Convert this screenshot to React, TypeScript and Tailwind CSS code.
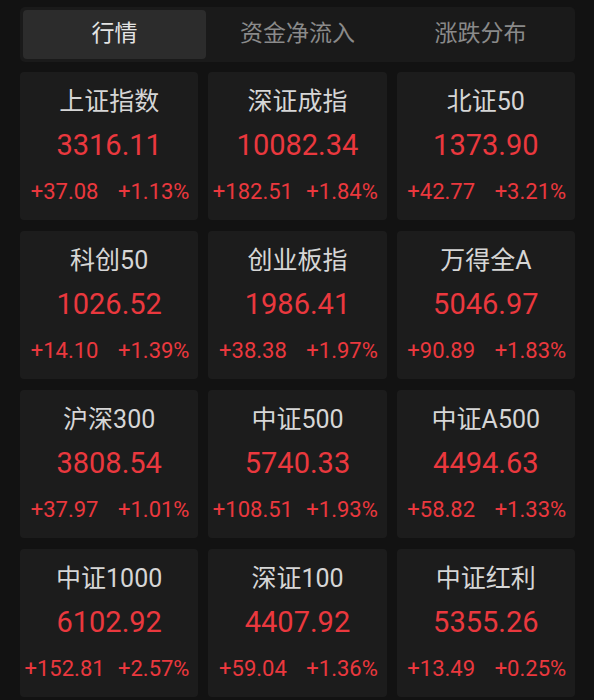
const tabs = ['行情', '资金净流入', '涨跌分布'];

const indices = [
  { name: '上证指数', price: '3316.11', change: '+37.08', pct: '+1.13%' },
  { name: '深证成指', price: '10082.34', change: '+182.51', pct: '+1.84%' },
  { name: '北证50', price: '1373.90', change: '+42.77', pct: '+3.21%' },
  { name: '科创50', price: '1026.52', change: '+14.10', pct: '+1.39%' },
  { name: '创业板指', price: '1986.41', change: '+38.38', pct: '+1.97%' },
  { name: '万得全A', price: '5046.97', change: '+90.89', pct: '+1.83%' },
  { name: '沪深300', price: '3808.54', change: '+37.97', pct: '+1.01%' },
  { name: '中证500', price: '5740.33', change: '+108.51', pct: '+1.93%' },
  { name: '中证A500', price: '4494.63', change: '+58.82', pct: '+1.33%' },
  { name: '中证1000', price: '6102.92', change: '+152.81', pct: '+2.57%' },
  { name: '深证100', price: '4407.92', change: '+59.04', pct: '+1.36%' },
  { name: '中证红利', price: '5355.26', change: '+13.49', pct: '+0.25%' },
];

function IndexCard({ item }: { item: (typeof indices)[number] }) {
  return (
    <div className="h-[148px] rounded-[4px] bg-[#1c1c1c] pt-[14px] flex flex-col items-center">
      <div className="text-[25px] leading-[32px] text-[#d6d6d6]">{item.name}</div>
      <div className="mt-[9px] text-[29px] leading-[36px] text-[#ea383e]">{item.price}</div>
      <div className="mt-[15px] w-full grid grid-cols-2 text-center text-[22px] leading-[28px] text-[#ea383e]">
        <span>{item.change}</span>
        <span>{item.pct}</span>
      </div>
    </div>
  );
}

export default function App() {
  return (
    <div
      className="min-h-screen w-[594px] h-[700px] overflow-hidden bg-[#121212] pl-[20px] pr-[19px] pt-[7px]"
      style={{ fontFamily: 'Roboto, "Noto Sans CJK SC", sans-serif' }}
    >
      {/* Tabs */}
      <div className="h-[55px] rounded-[5px] bg-[#1a1a1a] p-[3px] grid grid-cols-3">
        {tabs.map((t, i) => (
          <div
            key={t}
            className={
              i === 0
                ? 'rounded-[4px] bg-[#2c2c2c] flex items-center justify-center text-[23px] text-[#e4e4e4]'
                : 'flex items-center justify-center text-[23px] text-[#8a8a8a]'
            }
          >
            {t}
          </div>
        ))}
      </div>

      {/* Index grid */}
      <div className="mt-[10px] grid grid-cols-3 gap-x-[10px] gap-y-[11px]">
        {indices.map((item) => (
          <IndexCard key={item.name} item={item} />
        ))}
      </div>
    </div>
  );
}
